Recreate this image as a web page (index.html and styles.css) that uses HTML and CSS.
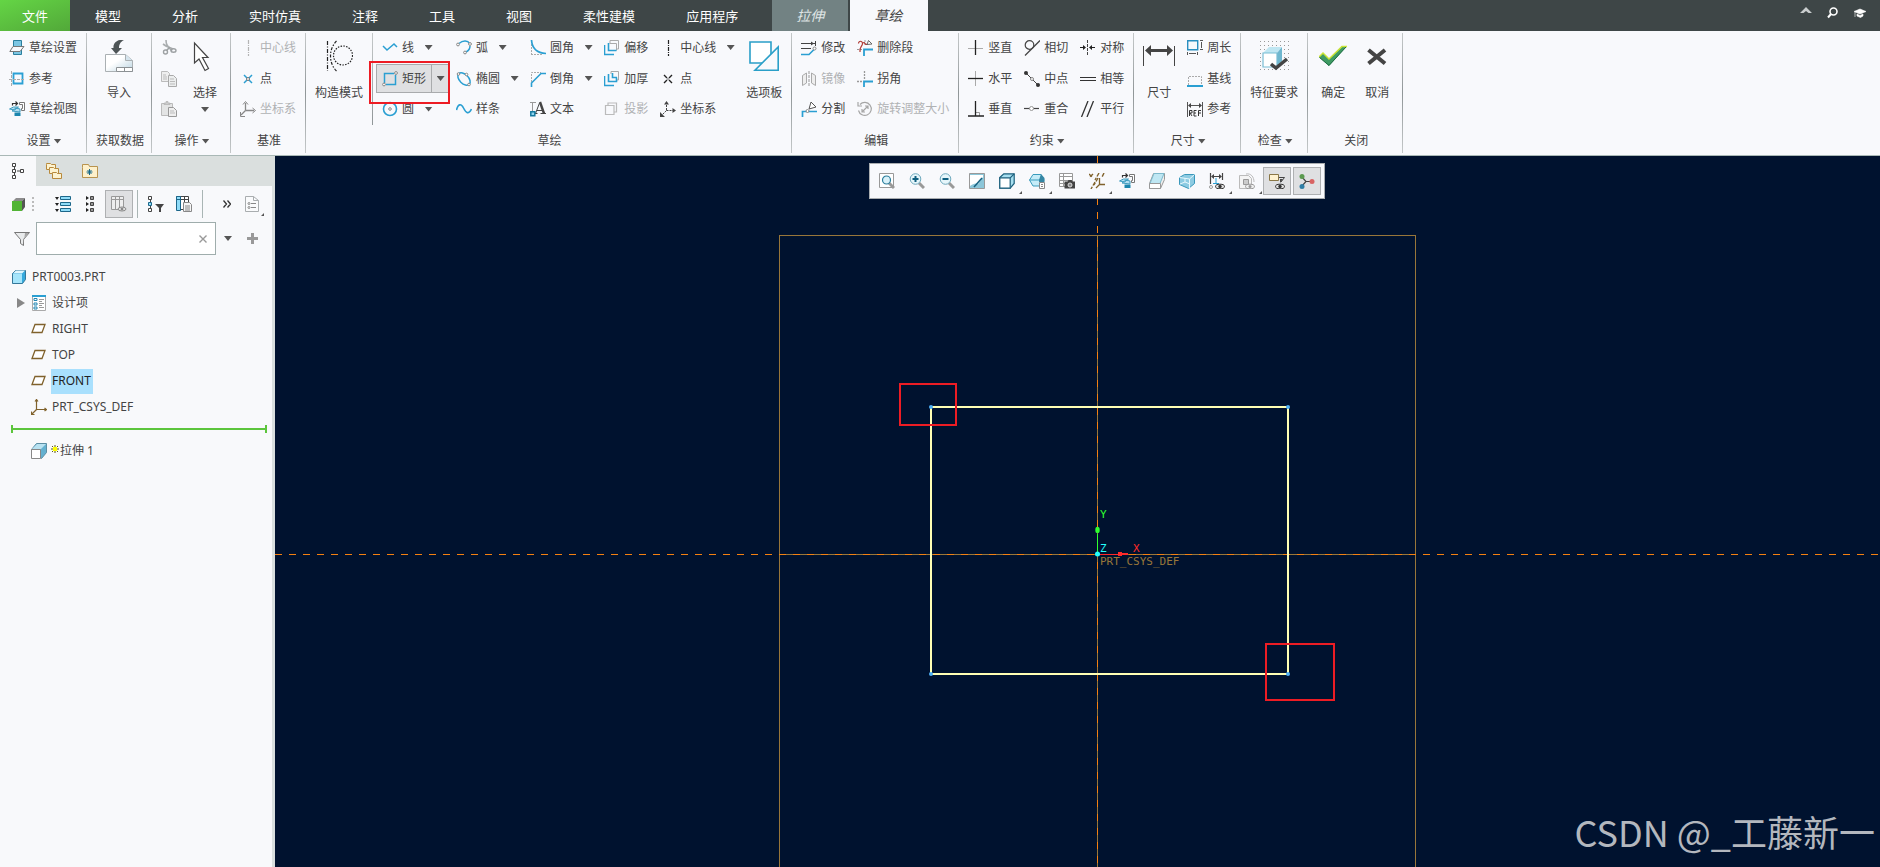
FILE: index.html
```html
<!DOCTYPE html>
<html lang="zh-CN">
<head>
<meta charset="utf-8">
<title>PRT0003 - 草绘</title>
<link rel="stylesheet" href="styles.css">
</head>
<body>
<nav class="tabs">
  <button class="tab file">文件</button>
  <button class="tab">模型</button>
  <button class="tab">分析</button>
  <button class="tab">实时仿真</button>
  <button class="tab">注释</button>
  <button class="tab">工具</button>
  <button class="tab">视图</button>
  <button class="tab">柔性建模</button>
  <button class="tab">应用程序</button>
  <button class="tab context">拉伸</button>
  <button class="tab active">草绘</button>
  <div class="tools">
    <button aria-label="最小化功能区"><svg width="12" height="16" viewBox="0 0 12 16"><path d="M0 9 6 3l6 6H8.500L6 7 3.500 9z" fill="#c9cdce"/></svg></button>
    <button aria-label="搜索"><svg width="12" height="16" viewBox="0 0 12 16"><circle cx="6.500" cy="7.500" r="3.500" fill="none" stroke="#fff" stroke-width="1.600"/><path d="M4 10 1 13.500" stroke="#fff" stroke-width="2"/></svg></button>
    <button aria-label="学习"><svg width="12" height="16" viewBox="0 0 12 16"><path d="M0 7.500 6 5l6 2.500L6 10zM3 10l3 1.500L9 10v2l-2.500 1.500L3 12zM1 8v5" fill="#fff" stroke="#fff" stroke-width=".6"/></svg></button>
  </div>
</nav>

<header class="ribbon">
  <section class="group">
    <div class="body">
      <div class="col">
        <div class="cmd"><button class="act"><svg class="i" viewBox="0 0 16 16"><path d="M4.500.5h8v14h-8z" fill="#7cc6e3" stroke="#2a7f9e"/><path d="M.8 11.500 4 6.500h11l-4 5z" fill="#f8f9fc" stroke="#777"/></svg>草绘设置</button></div>
        <div class="cmd"><button class="act"><svg class="i" viewBox="0 0 16 16"><path d="M4.500 2.500h9v10h-9z" fill="none" stroke="#2aa0d4" stroke-width="1.800"/><path d="M2.500 0v16M0 8.500h16" stroke="#aaa" stroke-dasharray="3 1" fill="none"/></svg>参考</button></div>
        <div class="cmd"><button class="act"><svg class="i" viewBox="0 0 16 16"><path d="m.5 8 4-2h5l-4 3zM3 10l4-3 4 1v3z" fill="#b5e0f2" stroke="#3d9cc0"/><path d="M5.500 11.500h6v3.500h-6z" fill="#1c86ae"/><path d="M3.500 4.500v-2H8M6.500.5l2 2-2 2" fill="none" stroke="#333" stroke-width="1.200"/><path d="M10.500 1.500h5v8h-3v-2h1v-4h-3z" fill="#fff" stroke="#777"/></svg>草绘视图</button></div>
      </div>
    </div>
    <button class="label">设置<i class="arr"></i></button>
  </section>

  <section class="group">
    <div class="body">
      <button class="big"><svg width="28" height="32" viewBox="0 0 28 32"><defs><linearGradient id="imp" x1="0" x2="1" y1="0" y2="1"><stop offset=".4" stop-color="#fff"/><stop offset="1" stop-color="#b9d3e0"/></linearGradient></defs><path d="M.5 14.500h20l7 6v11H.5z" fill="url(#imp)" stroke="#aab0b3"/><path d="M20.500 14.500v6h7" fill="#d6e5ee" stroke="#aab0b3"/><path d="M11.500 27.500h16v4h-16zM19.500 27.500v4" fill="#fff" stroke="#8c9194"/><path d="M19 0C12-1 8 3 8.500 8H6l5 6 6-6h-3c0-3 1-6 5-8z" fill="#4e5557"/></svg><span>导入</span></button>
    </div>
    <div class="label">获取数据</div>
  </section>

  <section class="group">
    <div class="body">
      <div class="col icons">
        <div class="cmd"><button class="act" disabled aria-label="剪切"><svg class="i" viewBox="0 0 16 16"><path d="M5 0c0 4 1 6 6 11M2 4c4 3 6 3 10 5" fill="none" stroke="#aaaeb0" stroke-width="1.600"/><circle cx="4.500" cy="12" r="2" fill="none" stroke="#9da1a3" stroke-width="1.400"/><ellipse cx="12.500" cy="10.500" rx="2.500" ry="1.800" fill="none" stroke="#9da1a3" stroke-width="1.400"/><path d="M9 7 5.500 10.500" stroke="#9da1a3" stroke-width="1.600"/></svg></button></div>
        <div class="cmd"><button class="act" disabled aria-label="复制"><svg class="i" viewBox="0 0 16 16"><path d="M.5.5h6l2 2v8h-8z" fill="#eee" stroke="#bbb"/><path d="M7.500 4.500h5l3 3v8h-8z" fill="#eceeee" stroke="#aaa"/><path d="M2 4h3M2 6h4M2 8h4M9 8h4M9 10.500h5M9 13h5" stroke="#bbb"/></svg></button></div>
        <div class="cmd"><button class="act" disabled aria-label="粘贴"><svg class="i" viewBox="0 0 16 16"><path d="M.5 2.500h11v12H.5z" fill="#e3e4e4" stroke="#bbb"/><path d="M3 3.500V2h2V.5h2V2h2v1.500z" fill="#ccc" stroke="#aaa" stroke-width=".6"/><path d="M7.500 6.500h5l3 3v6h-8z" fill="#eee" stroke="#999"/><path d="M9 10h4M9 12h5" stroke="#bbb"/></svg></button></div>
      </div>
      <button class="big select"><svg width="24" height="32" viewBox="0 0 24 32"><path d="M1.500 3v20l4.500-4 6 11.500 3.500-2-6-11H15z" fill="#fff" stroke="#444" stroke-width="1.200"/></svg><span>选择</span><i class="arr"></i></button>
    </div>
    <button class="label">操作<i class="arr"></i></button>
  </section>

  <section class="group">
    <div class="body">
      <div class="col">
        <div class="cmd"><button class="act" disabled><svg class="i" viewBox="0 0 16 16"><path d="M8.500 0v16" stroke="#b4b4b4" stroke-width="1.200" stroke-dasharray="4 1 1 1"/></svg>中心线</button></div>
        <div class="cmd"><button class="act"><svg class="i" viewBox="0 0 16 16"><path d="m4 4 8 8M12 4l-8 8" stroke="#2a9fd2" stroke-width="1.500"/><circle cx="8" cy="8" r="1.500" fill="#fff" stroke="#777"/></svg>点</button></div>
        <div class="cmd"><button class="act" disabled><svg class="i" viewBox="0 0 16 16"><path d="M5.500 9V2M5.500 9.500H14M5.500 9.500 1 14" stroke="#888" fill="none" stroke-width="1.300"/><path d="M3 3.500 5.500.5 8 3.500M12.500 7l3 2.500-3 2.500M.5 11v4.500H5" stroke="#888" fill="none"/></svg>坐标系</button></div>
      </div>
    </div>
    <div class="label">基准</div>
  </section>

  <section class="group">
    <div class="body">
      <button class="big"><svg width="28" height="32" viewBox="0 0 28 32" fill="none" stroke="#222" stroke-width="1.200"><path d="M2.500 1v30" stroke-dasharray="4 1.500 1 1.500"/><path d="M11.500 1c-8 8-8 22 0 30" stroke-dasharray="3 1.500 1.500 1.500"/><circle cx="18" cy="15.500" r="9.500" stroke-dasharray="1.500 1.300"/></svg><span>构造模式</span></button>
      <div class="rule"></div>
      <div class="col">
        <div class="cmd split"><button class="act"><svg class="i" viewBox="0 0 16 16"><path d="m1 6 4 4 7-6 3 3" fill="none" stroke="#2a9fd2" stroke-width="1.500"/></svg>线</button><button class="drop" aria-label="线选项"><i class="arr"></i></button></div>
        <div class="cmd split pressed"><button class="act"><svg class="i" viewBox="0 0 16 16"><path d="M12 2.500H2.500V12M4 13.500h9.500V4" fill="none" stroke="#2a9fd2" stroke-width="1.500"/><circle cx="14" cy="2" r="1.400" fill="#fff" stroke="#888"/><circle cx="2" cy="13.500" r="1.400" fill="#fff" stroke="#888"/></svg>矩形</button><button class="drop" aria-label="矩形选项"><i class="arr"></i></button><div class="mark"></div></div>
        <div class="cmd split"><button class="act"><svg class="i" viewBox="0 0 16 16"><circle cx="8" cy="8" r="6.500" fill="none" stroke="#2a9fd2" stroke-width="1.600"/><circle cx="8" cy="8" r="1.300" fill="#fff" stroke="#888"/></svg>圆</button><button class="drop" aria-label="圆选项"><i class="arr"></i></button></div>
      </div>
      <div class="col">
        <div class="cmd split"><button class="act"><svg class="i" viewBox="0 0 16 16"><path d="M3 3.500c4-3.500 9-3 10.500 0M14 6c0 3-2 5-4 6" fill="none" stroke="#2a9fd2" stroke-width="1.500"/><circle cx="2" cy="4.500" r="1.400" fill="#fff" stroke="#888"/><circle cx="14" cy="4" r="1.400" fill="#fff" stroke="#888"/><circle cx="9" cy="12.500" r="1.400" fill="#fff" stroke="#888"/></svg>弧</button><button class="drop" aria-label="弧选项"><i class="arr"></i></button></div>
        <div class="cmd split"><button class="act"><svg class="i" viewBox="0 0 16 16"><ellipse cx="8" cy="8" rx="7.500" ry="4.500" transform="rotate(45 8 8)" fill="none" stroke="#2a9fd2" stroke-width="1.500"/><circle cx="2.500" cy="3" r="1.300" fill="#fff" stroke="#888"/><circle cx="10.500" cy="3.500" r="1.300" fill="#fff" stroke="#888"/><circle cx="13" cy="13.500" r="1.300" fill="#fff" stroke="#888"/></svg>椭圆</button><button class="drop" aria-label="椭圆选项"><i class="arr"></i></button></div>
        <div class="cmd"><button class="act"><svg class="i" viewBox="0 0 16 16"><path d="M.5 9C2 3 5 2 7.500 7s5 7 8 1" fill="none" stroke="#2a9fd2" stroke-width="1.600"/></svg>样条</button></div>
      </div>
      <div class="col">
        <div class="cmd split"><button class="act"><svg class="i" viewBox="0 0 16 16"><path d="M1.500 4v11M1 14.500h12" stroke="#aaa" stroke-dasharray="2 1" fill="none"/><path d="M1.500 0C2 8 6 13 16 13.500" fill="none" stroke="#2a9fd2" stroke-width="1.700"/></svg>圆角</button><button class="drop" aria-label="圆角选项"><i class="arr"></i></button></div>
        <div class="cmd split"><button class="act"><svg class="i" viewBox="0 0 16 16"><path d="M1.500 11V1.500H11" stroke="#aaa" stroke-dasharray="2 1" fill="none"/><path d="M1.500 16v-4L11 2.500h5" fill="none" stroke="#2a9fd2" stroke-width="1.600"/></svg>倒角</button><button class="drop" aria-label="倒角选项"><i class="arr"></i></button></div>
        <div class="cmd"><button class="act"><svg class="i" viewBox="0 0 16 16"><path d="M2.500 11V2M0 1.500h6" stroke="#999"/><path d="M5.500 12.500 9.500 2M7 9.500h5M4.500 12.500h3M10.500 12.500H16" fill="none" stroke="#444"/><path d="m10 1 4 11.500" stroke="#444" stroke-width="2.400"/><path d="M.8 10.800h4v4h-4z" fill="#8fd4ef" stroke="#157aa0" stroke-width="1.500"/></svg>文本</button></div>
      </div>
      <div class="col">
        <div class="cmd"><button class="act"><svg class="i" viewBox="0 0 16 16"><path d="M5.500 3.500h7v7M6 3V.5h8.500V9H13" fill="none" stroke="#aaa"/><path d="M.5 5v9.500H10M4.500 3v7.500h8" fill="none" stroke="#2a9fd2" stroke-width="1.600"/></svg>偏移</button></div>
        <div class="cmd"><button class="act"><svg class="i" viewBox="0 0 16 16"><path d="M7 3V.5h7.500V9H13" fill="none" stroke="#aaa"/><path d="M.5 5v9.500H10M4.500 3v7.500h8V6.500M8.500 2v4.500H13" fill="none" stroke="#2a9fd2" stroke-width="1.600"/></svg>加厚</button></div>
        <div class="cmd"><button class="act" disabled><svg class="i" viewBox="0 0 16 16"><path d="M1.500 4.500h8.500v9H1.500zM4 4V2h8.500v9H10" fill="none" stroke="#bbb" stroke-width="1.200"/></svg>投影</button></div>
      </div>
      <div class="col">
        <div class="cmd split"><button class="act"><svg class="i" viewBox="0 0 16 16"><path d="M8.500 0v16" stroke="#222" stroke-width="1.200" stroke-dasharray="4 1 1 1"/></svg>中心线</button><button class="drop" aria-label="中心线选项"><i class="arr"></i></button></div>
        <div class="cmd"><button class="act"><svg class="i" viewBox="0 0 16 16"><path d="m4 4 3 3M9 9l3 3M12 4 9 7M7 9l-3 3" stroke="#222" stroke-width="1.400"/><circle cx="8" cy="8" r=".7" fill="#222"/></svg>点</button></div>
        <div class="cmd"><button class="act"><svg class="i" viewBox="0 0 16 16"><path d="M6.500 9V3M6.500 9.500H13M6.500 9.500 2 14" stroke="#444" fill="none" stroke-dasharray="2 1"/><path d="M6.500 0 9 3.500H4zM16 9.500 12.500 12V7zM0 16v-5l5 5z" fill="#444"/></svg>坐标系</button></div>
      </div>
      <button class="big palette"><svg width="30" height="32" viewBox="0 0 30 32"><path d="M1 2h21v21H1z" fill="#fff" stroke="#2a9fc8" stroke-width="1.600"/><path d="M29.200 7v23.200H6z" fill="#f8f9fc" stroke="#2a9fc8" stroke-width="1.600"/></svg><span>选项板</span></button>
    </div>
    <div class="label">草绘</div>
  </section>

  <section class="group">
    <div class="body">
      <div class="col">
        <div class="cmd"><button class="act"><svg class="i" viewBox="0 0 16 16"><path d="M0 3.500h14M14.500 1v5M0 8.500h10" stroke="#444" fill="none"/><path d="M10 1.500v4l3-2z" fill="#444"/><path d="M0 14.500h8l5-5" fill="none" stroke="#2a9fd2" stroke-width="1.600"/><circle cx="13.500" cy="8.500" r="1.500" fill="#fff" stroke="#888"/></svg>修改</button></div>
        <div class="cmd"><button class="act" disabled><svg class="i" viewBox="0 0 16 16"><path d="M1.500 4.500 5.500 2v10l-4 2.500zM14.500 4.500 10.500 2v10l4 2.500z" fill="#eee" stroke="#aaa"/><path d="M8 0v16" stroke="#999" stroke-dasharray="3 1"/></svg>镜像</button></div>
        <div class="cmd"><button class="act"><svg class="i" viewBox="0 0 16 16"><path d="M1.500 16v-5.500H16" fill="none" stroke="#2a9fd2" stroke-width="1.700"/><circle cx="6.500" cy="10" r="1.500" fill="#fff" stroke="#888"/><path d="m8 8 2-7 5 5z" fill="#fff" stroke="#555"/></svg>分割</button></div>
      </div>
      <div class="col">
        <div class="cmd"><button class="act"><svg class="i" viewBox="0 0 16 16"><path d="M7 16V9.500h9" fill="none" stroke="#2a9fd2" stroke-width="1.800"/><path d="M0 9.500h5M8 0v6" stroke="#999" stroke-dasharray="2 1"/><path d="M1.500 3.500c0-3 4-3 4 0S2 7 3 12M6 3c2-2 2 3 4 1" fill="none" stroke="#b03a34" stroke-width="1.200"/><path d="m10 4.500 1.500-4L15 4z" fill="#fff" stroke="#666"/></svg>删除段</button></div>
        <div class="cmd"><button class="act"><svg class="i" viewBox="0 0 16 16"><path d="M7 16v-5.500h9" fill="none" stroke="#2a9fd2" stroke-width="1.800"/><path d="M0 10.500h5M7.500 0v8" stroke="#999" stroke-width="1.300" stroke-dasharray="2 1"/></svg>拐角</button></div>
        <div class="cmd"><button class="act" disabled><svg class="i" viewBox="0 0 16 16"><path d="M3 3.500a6.500 6.500 0 1 1-1.500 6M1 1v4h4M5 11l6-6M5 8v3h3M8 5h3v3" fill="none" stroke="#a6a6a6" stroke-width="1.200"/></svg>旋转调整大小</button></div>
      </div>
    </div>
    <div class="label">编辑</div>
  </section>

  <section class="group">
    <div class="body">
      <div class="col">
        <div class="cmd"><button class="act"><svg class="i" viewBox="0 0 16 16"><path d="M0 8.500h15" stroke="#aaa"/><path d="M7.500 0v15" stroke="#222" stroke-width="1.300"/></svg>竖直</button></div>
        <div class="cmd"><button class="act"><svg class="i" viewBox="0 0 16 16"><path d="M7.500 0v15" stroke="#aaa"/><path d="M0 7.500h15" stroke="#222" stroke-width="1.300"/></svg>水平</button></div>
        <div class="cmd"><button class="act"><svg class="i" viewBox="0 0 16 16"><path d="M8 11.500h3.500V15" fill="none" stroke="#999"/><path d="M7.500 0v15M0 15h16" stroke="#222" stroke-width="1.300"/></svg>垂直</button></div>
      </div>
      <div class="col">
        <div class="cmd"><button class="act"><svg class="i" viewBox="0 0 16 16"><circle cx="5.500" cy="5" r="4.300" fill="none" stroke="#444" stroke-width="1.200"/><path d="M16 .5 1 15.500" stroke="#444" stroke-width="1.300"/></svg>相切</button></div>
        <div class="cmd"><button class="act"><svg class="i" viewBox="0 0 16 16"><path d="m2 2 12 12" stroke="#444"/><circle cx="2" cy="2" r="2" fill="#333"/><circle cx="14" cy="14" r="2" fill="#333"/><circle cx="8" cy="8" r="1.500" fill="#fff" stroke="#888"/></svg>中点</button></div>
        <div class="cmd"><button class="act"><svg class="i" viewBox="0 0 16 16"><path d="M0 7.500h15" stroke="#444" stroke-width="1.200"/><circle cx="7.500" cy="7.500" r="2" fill="#fff" stroke="#999"/></svg>重合</button></div>
      </div>
      <div class="col">
        <div class="cmd"><button class="act"><svg class="i" viewBox="0 0 16 16"><path d="M7.500 0v16" stroke="#444" stroke-dasharray="3 1"/><path d="M0 7.500h3M11 7.500h4" stroke="#222" stroke-width="1.200"/><path d="M3 5v5l3-2.500zM12 5v5L9 7.500z" fill="#222"/></svg>对称</button></div>
        <div class="cmd"><button class="act"><svg class="i" viewBox="0 0 16 16"><path d="M0 6.500h16M0 9.500h16" stroke="#333" stroke-width="1.200"/></svg>相等</button></div>
        <div class="cmd"><button class="act"><svg class="i" viewBox="0 0 16 16"><path d="M1.500 16 8 0M7 16l6.500-16" stroke="#333" stroke-width="1.300"/></svg>平行</button></div>
      </div>
    </div>
    <button class="label">约束<i class="arr"></i></button>
  </section>

  <section class="group">
    <div class="body">
      <button class="big"><svg width="32" height="32" viewBox="0 0 32 32"><path d="M.5 6v20M31.500 6v20" stroke="#444"/><path d="M6 10.500h20" stroke="#444" stroke-width="3"/><path d="M2 10.500 8 5v11zM30 10.500 24 5v11z" fill="#444"/></svg><span>尺寸</span></button>
      <div class="col">
        <div class="cmd"><button class="act"><svg class="i" viewBox="0 0 16 16"><path d="M.7.7h10v9H.7z" fill="none" stroke="#2a8fc0" stroke-width="1.400"/><path d="M13 .5h3M13 9.500h3M14.500 2v6M.5 12v3M10.500 12v3M2 13.500h7" stroke="#555" fill="none"/></svg>周长</button></div>
        <div class="cmd"><button class="act"><svg class="i" viewBox="0 0 16 16"><path d="M1.500 14V5.500h13V14" fill="none" stroke="#aaa" stroke-dasharray="2 1"/><path d="M0 15h16" stroke="#2a9fd2" stroke-width="2"/></svg>基线</button></div>
        <div class="cmd"><button class="act"><svg class="i" viewBox="0 0 16 16"><path d="M.5 1v15M15.500 1v15M3 4.500h10" stroke="#555"/><path d="M1 4.500 4 2v5zM15 4.500 12 2v5z" fill="#444"/><path d="M2.500 15V9.500H5V12H3l2 3M9.500 9.500H7V15h2.500M7 12h2M11.500 15V9.500H14M11.500 12H14" fill="none" stroke="#333"/></svg>参考</button></div>
      </div>
    </div>
    <button class="label">尺寸<i class="arr"></i></button>
  </section>

  <section class="group">
    <div class="body">
      <button class="big"><svg width="30" height="32" viewBox="0 0 30 32"><path d="M1 1.500h29M1 5.500h29M1 9.500h29M1 13.500h29M1 17.500h29M1 21.500h29M1 25.500h29M1 29.500h29" stroke="#999" stroke-dasharray="1 3"/><path d="m4 13 6-6h13l-5 6z" fill="#bfe6f2"/><path d="m18 13 5-6v14l-5 6z" fill="#6fb7cf"/><path d="M4 13h14v14H4z" fill="#fff" stroke="#79bdd4" stroke-width="1.200"/><path d="m12 24 5 4 11-9" fill="none" stroke="#444" stroke-width="3.500"/></svg><span>特征要求</span></button>
    </div>
    <button class="label">检查<i class="arr"></i></button>
  </section>

  <section class="group close">
    <div class="body">
      <button class="big"><svg width="28" height="32" viewBox="0 0 28 32"><path d="m0 17 4-4 6 6L23 6h5L10 26z" fill="#3f9b63"/><path d="m0 17 4-4 6 6L23 6.500h5" fill="none" stroke="#cbe436" stroke-width="1.500"/><path d="m.5 17.500 9.500 8L27 7" fill="none" stroke="#1c6b42"/></svg><span>确定</span></button>
      <button class="big"><svg width="28" height="32" viewBox="0 0 28 32"><path d="M5.500 10 22 23.500M22 10 5.500 23.500" stroke="#444" stroke-width="4"/></svg><span>取消</span></button>
    </div>
    <div class="label">关闭</div>
  </section>
</header>

<main class="work">
  <aside class="panel">
    <div class="ptabs">
      <button class="on" aria-label="模型树"><svg width="12" height="16" viewBox="0 0 12 16"><path d="M2.500 4v2M2.500 10v2M5 8h3" stroke="#444"/><path d="M.5.5h3v3h-3zM.5 6.500h3v3h-3zM.5 12.500h3v3h-3zM8.500 6.500h3v3h-3z" fill="#fff" stroke="#444"/></svg></button>
      <button aria-label="文件夹浏览器"><svg class="i" viewBox="0 0 16 16"><g fill="#fdf3d0" stroke="#b88a3c"><path d="M.5 1.500V.5h4l1 1h4v5h-9z"/><path d="M3.500 6.500v-2h4l1 1h4v5h-9z"/><path d="M6.500 10.500v-1h4l1 1h4v5h-9z"/></g></svg></button>
      <button aria-label="收藏夹"><svg class="i" viewBox="0 0 16 16"><path d="M.5 4.500v-3h6l1 2h8v11H.5z" fill="#fdf0cb" stroke="#b8934e"/><path d="M7.500 6v6M4.500 9h6M5.500 7l4 4M9.500 7l-4 4" stroke="#15688a"/></svg></button>
    </div>
    <div class="pbar">
      <button class="cube" aria-label="模型"><svg width="14" height="16" viewBox="0 0 14 16"><path d="m1 5 3-3h9l-3 3z" fill="#8c8c8c"/><path d="m10 5 3-3v9l-3 4z" fill="#555"/><path d="M0 5h10v10H0z" fill="#52b435"/></svg></button>
      <svg class="grip" width="2" height="16" viewBox="0 0 2 16"><path d="M1 1v15" stroke="#bbb" stroke-width="2" stroke-dasharray="2 2"/></svg>
      <button class="tb" aria-label="全部展开"><svg class="i" viewBox="0 0 16 16"><path d="M0 1h4L2 4zM0 7h4l-2 3zM0 13h4l-2 3z" fill="#222"/><path d="M5.500.5h10v3h-10zM5.500 6.500h10v3h-10zM5.500 12.500h10v3h-10z" fill="#8fdcf8" stroke="#1c678a"/></svg></button>
      <button class="tb" aria-label="全部折叠"><svg class="i" viewBox="0 0 16 16"><path d="m3 0 3 2-3 2zM3 6l3 2-3 2zM3 12l3 2-3 2z" fill="#222"/><path d="M7.500.5h3v3h-3zM7.500 6.500h3v3h-3zM7.500 12.500h3v3h-3z" fill="#999" stroke="#444"/></svg></button>
      <button class="tb on" aria-label="显示列"><svg class="i" viewBox="0 0 16 16"><path d="M.5.5h12v13H.5zM4.500.5v13M8.500.5v13M.5 3.500h12" fill="#eee" stroke="#999"/><ellipse cx="11" cy="13" rx="4" ry="2" fill="#ddd" stroke="#888"/><circle cx="11" cy="13" r="1.300" fill="#888"/></svg></button>
      <span class="vr"></span>
      <button class="tb" aria-label="树过滤器"><svg class="i" viewBox="0 0 16 16"><path d="M2.500 4v8" stroke="#444"/><path d="M.5.5h3v3h-3zM.5 12.500h3v3h-3z" fill="#fff" stroke="#444"/><path d="M.5 6.500h3v3h-3z" fill="#8fdcf8" stroke="#1c678a"/><path d="M7 8h9l-3 4v4h-2v-4z" fill="#444"/></svg></button>
      <button class="tb" aria-label="树列"><svg class="i" viewBox="0 0 16 16"><path d="M.5.5h12v13H.5zM8.500.5v6M.5 3.500h12" fill="#fff" stroke="#444"/><path d="M.5.500h4v14h-4zM.5 3.500h4" fill="#8fdcf8" stroke="#1c678a"/><path d="M7.500 6.500h6l2 2v7h-8z" fill="#f6f6f6" stroke="#888"/><path d="M9 10h5M9 12h5M9 14h5" stroke="#888"/></svg></button>
      <span class="vr"></span>
      <button class="more" aria-label="更多"><svg width="8" height="8" viewBox="0 0 8 8"><path d="m.5.5 3 3.500-3 3.500M4.500.5l3 3.500-3 3.500" fill="none" stroke="#333" stroke-width="1.300"/></svg></button>
      <button class="tb menu" aria-label="设置"><svg width="14" height="16" viewBox="0 0 14 16"><path d="M.5.5h8l5 4v11H.5z" fill="#fafbfc" stroke="#a9adaf"/><path d="M8.500.5v4h5" fill="none" stroke="#a9adaf"/><circle cx="4" cy="7.500" r="1" fill="none" stroke="#888"/><circle cx="4" cy="11.500" r="1" fill="none" stroke="#888"/><path d="M6 7.500h5M6 11.500h5" stroke="#888"/></svg></button>
    </div>
    <div class="filter">
      <svg class="i" viewBox="0 0 16 16"><path d="M.5 1.500h15l-6 7v6l-3-2v-4z" fill="#e9ebec" stroke="#777"/><path d="M11 2h3.500l-5 6v5.500z" fill="#a5a5a5"/></svg>
      <div class="field"><input type="text" aria-label="过滤"><button aria-label="清除"><svg width="8" height="8" viewBox="0 0 8 8"><path d="m.5.5 7 7M7.500.5l-7 7" stroke="#999" stroke-width="1.400"/></svg></button></div>
      <button class="fdrop" aria-label="过滤选项"><i class="arr"></i></button>
      <button class="fadd" aria-label="添加"><svg width="11" height="11" viewBox="0 0 11 11"><path d="M5.500 0v11M0 5.500h11" stroke="#999" stroke-width="3"/></svg></button>
    </div>
    <ul class="tree">
      <li class="root"><svg width="14" height="14" viewBox="0 0 14 14"><path d="m.5 3.500 3-3h10v9l-3 4H.5z" fill="#36a9dc" stroke="#35789a"/><path d="m1 3.500 3-3h9l-3 3z" fill="#e0f6fd"/><path d="M1 4h9v9H1z" fill="#a5e5fb"/></svg><span>PRT0003.PRT</span></li>
      <li class="sub"><svg class="exp" width="8" height="10" viewBox="0 0 8 10"><path d="m0 0 8 5-8 5z" fill="#888"/></svg><svg class="i" viewBox="0 0 16 16"><path d="M1.500.5h13v15h-13z" fill="#fff" stroke="#aaa"/><path d="M1 1h14" stroke="#2a9fd2" stroke-width="2"/><path d="M3 3.500h3v2H3zM3 8h3v2H3zM3 12h3v2H3z" fill="#fff" stroke="#2587b3"/><path d="M8 4.500h5M8 6.500h3M8 8.500h5M8 10.500h3M8 12.500h5" stroke="#999"/></svg><span>设计项</span></li>
      <li><svg class="i" viewBox="0 0 16 16"><path d="M4 3.500h10l-3 8H1z" fill="#fff" stroke="#80622c" stroke-width="1.300"/></svg><span>RIGHT</span></li>
      <li><svg class="i" viewBox="0 0 16 16"><path d="M4 3.500h10l-3 8H1z" fill="#fff" stroke="#80622c" stroke-width="1.300"/></svg><span>TOP</span></li>
      <li><svg class="i" viewBox="0 0 16 16"><path d="M4 3.500h10l-3 8H1z" fill="#fff" stroke="#80622c" stroke-width="1.300"/></svg><span class="sel">FRONT</span></li>
      <li><svg class="i" viewBox="0 0 16 16"><path d="M5.500 1v9.500H15M5.500 10.500 1 15M4 2.500l1.500-2L7 2.500M13.500 9l2 1.500-2 1.500M.5 12.500v3h3" fill="none" stroke="#80622c" stroke-width="1.200"/></svg><span>PRT_CSYS_DEF</span></li>
      <li class="insert"></li>
      <li><svg class="i" viewBox="0 0 16 16"><path d="m.5 6.500 5-6h10v9l-5 6z" fill="#64b1d0" stroke="#5c8ea3"/><path d="m1 6 5-5h9l-5 5z" fill="#b9e2f1"/><path d="M.5 6.500h9v9h-9z" fill="#fff" stroke="#888"/></svg><span class="new"><svg width="8" height="8" viewBox="0 0 8 8"><path d="M4 0v8M0 4h8M1 1l6 6M7 1 1 7" stroke="#5e5b10"/><path d="M2 2h4v4H2z" fill="#ff0"/></svg>拉伸 1</span></li>
    </ul>
  </aside>

  <div class="canvas">
    <svg class="scene" width="100%" height="100%">
      <g fill="none" shape-rendering="crispEdges">
        <path d="M504.500 720V79.500h636V720M504 398.500h637M822.500 79v641" stroke="#98763a"/>
        <path d="M0 398.500h2400M822.500 0v720" stroke="#f58010" stroke-dasharray="7 7"/>
        <path d="M656 251h357v267H656z" stroke="#ffffb4" stroke-width="2"/>
        <path d="M822.500 378v20" stroke="#2fff2f"/>
        <path d="M825 398.500h28" stroke="#ff2a2a"/>
      </g>
      <g fill="#4fb0f5"><circle cx="656" cy="251" r="2"/><circle cx="1013" cy="251" r="2"/><circle cx="656" cy="518" r="2"/><circle cx="1013" cy="518" r="2"/></g>
      <ellipse cx="822.500" cy="374" rx="2.200" ry="3.200" fill="#2fff2f"/>
      <path d="M843 396h4v1h6v2h-6v1h-4z" fill="#ff2a2a"/>
      <circle cx="822.500" cy="398" r="2.500" fill="#2ff"/>
      <g class="csys"><text x="825" y="362" fill="#2fff2f">Y</text><text x="825" y="396" fill="#2ff">Z</text><text x="858" y="396" fill="#ff2a2a">X</text><text x="825" y="409" fill="#98763a">PRT_CSYS_DEF</text></g>
      <g fill="none" stroke="#ed1c24" stroke-width="2"><path d="M625 228h56v41h-56zM991 488h68v56h-68z"/></g>
    </svg>
    <div class="viewbar">
      <button aria-label="重新调整"><svg class="i" viewBox="0 0 16 16"><path d="M.5.5h14v14H.5z" fill="#fff" stroke="#999"/><path d="m10 10 5 5" stroke="#999" stroke-width="3"/><circle cx="7.500" cy="7" r="4" fill="#d9f1f9" stroke="#2a7d9c" stroke-width="1.200"/></svg></button>
      <button aria-label="放大"><svg class="i" viewBox="0 0 16 16"><path d="m10 10 5 5" stroke="#999" stroke-width="3"/><circle cx="6.500" cy="6" r="5.300" fill="#e6f6fb" stroke="#6fa9bd"/><path d="M3.500 6h6M6.500 3v6" stroke="#0f5f80" stroke-width="2"/></svg></button>
      <button aria-label="缩小"><svg class="i" viewBox="0 0 16 16"><path d="m10 10 5 5" stroke="#999" stroke-width="3"/><circle cx="6.500" cy="6" r="5.300" fill="#e6f6fb" stroke="#6fa9bd"/><path d="M3.500 6h6" stroke="#0f5f80" stroke-width="2"/></svg></button>
      <button aria-label="重画"><svg class="i" viewBox="0 0 16 16"><path d="M.5.5h15v15H.5z" fill="#8cc6d9" stroke="#999"/><path d="M1 2h13v2L9 11c-3-1-5 0-8 2z" fill="#fff"/><path d="m13 5-8 9" stroke="#156080" stroke-width="1.500"/></svg></button>
      <button class="menu" aria-label="显示样式"><svg class="i" viewBox="0 0 16 16"><path d="m.8 4.500 4-3.700h10.400v9.700l-4 4.700H.8z" fill="#a7dff0" stroke="#1b5f7c" stroke-width="1.200"/><path d="M.8 4.800h10.400v10.400H.8zM11.200 4.800l4-4" fill="#fff" stroke="#1b5f7c" stroke-width="1.200"/></svg></button>
      <button class="menu" aria-label="已保存方向"><svg class="i" viewBox="0 0 16 16"><path d="M.5 7 4 1.500h8L15 7l-3 6H4zM.5 7H15" fill="#c5ecf8" stroke="#3a9cbd"/><path d="m10 7 2-6 3.500 4v4H10z" fill="#3587a5"/><path d="M10.500 9.500h5v6h-5z" fill="#fff" stroke="#888"/><path d="M12 11.500h2M12 13.500h2" stroke="#888"/></svg></button>
      <button aria-label="视图管理器"><svg class="i" viewBox="0 0 16 16"><path d="M.5.5h13v13H.5zM4.500.5v13M.5 3.500h13M.5 7.500h13M.5 10.500h13" fill="#fff" stroke="#999"/><path d="M5.500 8.500h3l1-1.500h3l1 1.500H16V15.500H5.500z" fill="#444"/><circle cx="11" cy="12" r="2" fill="#888" stroke="#ddd"/></svg></button>
      <button class="menu" aria-label="基准显示过滤器"><svg class="i" viewBox="0 0 16 16"><path d="m0 1 4 4M4 1 0 5M10 0 6 7M15 0l-2 4M6 9l-4 7M9 5l-4 7" stroke="#80622c" stroke-width="1.400" stroke-dasharray="4 1.500"/><path d="M10.500 5v6.500H16M10.500 11.500 7 15" fill="none" stroke="#80622c" stroke-width="1.300"/></svg></button>
      <button aria-label="草绘视图"><svg class="i" viewBox="0 0 16 16"><path d="m.5 8 4-2h5l-4 3zM3 10l4-3 4 1v3z" fill="#b5e0f2" stroke="#3d9cc0"/><path d="M5.500 11.500h6v3.500h-6z" fill="#1c86ae"/><path d="M3.500 4.500v-2H8M6.500.5l2 2-2 2" fill="none" stroke="#333" stroke-width="1.200"/><path d="M10.500 1.500h5v8h-3v-2h1v-4h-3z" fill="#fff" stroke="#777"/></svg></button>
      <button aria-label="修剪模型"><svg class="i" viewBox="0 0 16 16"><path d="m.5 10.500 4-10h11v6l-4 9H.5z" fill="#eee" stroke="#999"/><path d="m1 10.500 4-10h10l-4 10z" fill="#bfe7f3" stroke="#7cb9cc"/><path d="M.5 10.500h11v5H.5z" fill="#fff" stroke="#999"/></svg></button>
      <button aria-label="透视图"><svg class="i" viewBox="0 0 16 16"><path d="m.5 4.500 5-3h10v9l-6 5-9-4z" fill="#8dcbe2" stroke="#3b98bb"/><path d="m.5 4.500 10 1.500v9M10.500 6l5-4.500M1 11l5-2V5M6 9l5 2" fill="none" stroke="#e8f8fd"/></svg></button>
      <button class="menu" aria-label="尺寸显示"><svg class="i" viewBox="0 0 16 16"><path d="M1.500 0v11M13.500 0v7M3 3.500h9" stroke="#444" stroke-width="1.200"/><path d="M2 3.500 5 1v5zM13 3.500 10 1v5z" fill="#444"/><path d="M4 10.500h6M7 5v5" stroke="#2a9fd2"/><circle cx="2" cy="14" r="1.500" fill="#fff" stroke="#999"/><ellipse cx="11" cy="13.500" rx="4.500" ry="2.300" fill="#ddd" stroke="#333"/><circle cx="11" cy="13.500" r="1.700" fill="#333"/></svg></button>
      <button class="menu" aria-label="约束显示"><svg class="i" viewBox="0 0 16 16"><path d="M.5 2.500h9l3 3v10H.5z" fill="#f4f4f4" stroke="#bbb"/><path d="M4.500 6.500h5v5h-5z" fill="#ccc" stroke="#999"/><path d="M7 1c5-1 8 3 8 8" fill="none" stroke="#bbb"/><ellipse cx="11" cy="13.500" rx="4.500" ry="2.300" fill="#eee" stroke="#999"/><circle cx="11" cy="13.500" r="1.500" fill="#999"/></svg></button>
      <button class="on" aria-label="注释显示"><svg class="i" viewBox="0 0 16 16"><path d="M.5 1.500h9v6h-9z" fill="#fff2d0" stroke="#8a7747"/><path d="M10 4.500h5.500L12 9" fill="none" stroke="#444"/><path d="m14 6-3 4V6z" fill="#444"/><ellipse cx="11" cy="13.500" rx="4.500" ry="2.300" fill="#ddd" stroke="#333"/><circle cx="11" cy="13.500" r="1.700" fill="#333"/></svg></button>
      <button class="on" aria-label="旋转中心"><svg class="i" viewBox="0 0 16 16"><path d="m3 4 4 4.500L3 13M7 8.500h6" fill="none" stroke="#444" stroke-width="1.200"/><circle cx="3" cy="3.500" r="2.500" fill="#5b9a50"/><circle cx="3" cy="13.500" r="2.500" fill="#2f7ea5"/><circle cx="13" cy="8.500" r="2.500" fill="#d86363"/></svg></button>
    </div>
    <p class="watermark">CSDN @_工藤新一</p>
  </div>
</main>
</body>
</html>
```
FILE: styles.css
```css
* { box-sizing: border-box; }

html, body { height: 100%; }

body {
  margin: 0;
  display: flex;
  flex-direction: column;
  overflow: hidden;
  background: #f8f9fc;
  color: #444;
  font: 12px/16px "Noto Sans", "Noto Sans CJK SC", sans-serif;
}

button {
  margin: 0;
  padding: 0;
  border: 0;
  background: none;
  color: inherit;
  font: inherit;
  white-space: nowrap;
}

button:disabled { color: #b0b2b4; }

svg { display: block; flex: none; }

.i { width: 16px; height: 16px; }

.arr {
  flex: none;
  width: 8px;
  height: 5px;
  background: #555;
  clip-path: polygon(0 0, 100% 0, 50% 100%);
}

/* tabs */
.tabs {
  display: flex;
  flex: none;
  height: 31px;
  gap: 1px;
  background: #3e4647;
  color: #fff;
  font-size: 13px;
}

.tab { padding: 0 25px; }

.tab.file {
  margin-right: -1px;
  padding: 0 22px;
  background: linear-gradient(160deg, #64d545, #52a839);
}

.tab.context {
  margin-left: 8px;
  padding: 0 24px;
  background: #728283;
  color: #dfe5e5;
  font-size: 14px;
  font-style: italic;
}

.tab.active {
  margin-left: 1px;
  padding: 0 26px 0 24px;
  background: #f8f9fc;
  color: #444;
  font-size: 14px;
  font-style: italic;
}

.tools {
  display: flex;
  align-items: flex-start;
  gap: 15px;
  margin-left: auto;
  padding: 4px 14px 0 0;
}

/* ribbon */
.ribbon {
  display: flex;
  flex: none;
  border-bottom: 1px solid #a9b8b6;
}

.group {
  display: flex;
  flex-direction: column;
  padding: 0 4px 0 3px;
  background: linear-gradient(#c4c8c9, #909698 50%, #c4c8c9) right top 2px / 1px calc(100% - 4px) no-repeat;
}

.body {
  display: flex;
  justify-content: center;
  height: 94px;
  padding-top: 1px;
}

.label {
  display: flex;
  align-items: center;
  justify-content: center;
  gap: 3px;
  height: 30px;
  padding: 2px 4px 0 6px;
}

.col { display: flex; flex-direction: column; }

.cmd {
  position: relative;
  display: flex;
  align-items: center;
  align-self: flex-start;
  height: 31px;
}

.cmd:last-child { height: 30px; }

.act {
  display: flex;
  align-items: center;
  gap: 4px;
  height: 29px;
  padding: 0 6px;
}

.split .act { padding-right: 5px; }

.drop {
  display: flex;
  align-items: center;
  justify-content: center;
  width: 19px;
  height: 29px;
}

.pressed .act {
  padding-left: 5px;
  border: 1px solid #a9abad;
  border-right: 0;
  background: #dfe0e2;
}

.pressed .drop {
  border: 1px solid #a9abad;
  background: #dfe0e2;
}

.mark {
  position: absolute;
  z-index: 1;
  left: -7px;
  top: -2px;
  width: 81px;
  height: 43px;
  border: 2px solid #ed1c24;
  pointer-events: none;
}

.icons .act { padding-right: 5px; }

.big {
  display: flex;
  flex-direction: column;
  align-items: center;
  gap: 13px;
  padding: 8px 6px 0;
}

.big .arr { margin-top: -7px; }

.big.select { padding: 8px 10px 0 11px; }

.big.palette { padding: 8px 6px 0; }

.close .big { padding: 8px 8px 0; }

.rule {
  width: 1px;
  margin: 1px 3px 0;
  background: linear-gradient(#c4c8c9, #909698);
}

/* work area */
.work { display: flex; flex: 1; min-height: 0; }

.panel {
  flex: none;
  width: 275px;
  border-right: 3px solid #d9dfde;
  background: #f8f9fb;
}

.ptabs {
  display: flex;
  height: 30px;
  background: #dadfde;
}

.ptabs button {
  display: grid;
  place-items: center;
  width: 36px;
}

.ptabs .on { background: #f8f9fb; }

.pbar {
  display: flex;
  align-items: center;
  height: 36px;
  padding: 0 6px 0 12px;
}

.grip { margin: 0 15px 0 6px; }

.tb {
  display: grid;
  place-items: center;
  width: 28px;
  height: 28px;
}

.tb.on, .viewbar .on {
  border: 1px solid #aeb0b2;
  background: #dfe0e2;
}

.vr {
  width: 1px;
  height: 28px;
  margin: 0 4px;
  background: #a9b5b4;
}

.more { margin: 0 7px 0 auto; }

.menu { position: relative; }

.menu::after {
  content: "";
  position: absolute;
  right: 2px;
  bottom: 2px;
  width: 3px;
  height: 3px;
  background: #555;
  clip-path: polygon(100% 0, 100% 100%, 0 100%);
}

.viewbar .menu::after { right: -1px; bottom: 1px; }

.filter {
  display: flex;
  align-items: center;
  padding: 0 14px;
}

.field {
  display: flex;
  flex: 1;
  align-items: center;
  min-width: 0;
  height: 33px;
  margin: 0 8px 0 6px;
  padding-right: 8px;
  border: 1px solid #9fadac;
  background: #fff;
}

.field input {
  flex: 1;
  min-width: 0;
  border: 0;
  outline: 0;
  background: none;
  font: inherit;
}

.fdrop { display: flex; align-items: center; height: 16px; }

.fadd { margin-left: 15px; }

.tree {
  margin: 0;
  padding: 9px 0 0;
  list-style: none;
}

.tree li {
  display: flex;
  align-items: center;
  height: 26px;
  gap: 4px;
  padding-left: 31px;
}

.tree .root { gap: 5px; padding-left: 12px; }

.tree .sub { padding-left: 17px; }

.exp { margin-right: 2px; }

.tree span { padding: 4px 2px 5px 1px; }

.tree .sel { background: #a9e0fd; color: #222; }

.tree .new { display: flex; gap: 1px; padding-left: 0; }

.new svg { margin-top: 2px; }

.tree .insert {
  height: 18px;
  margin: 0 5px 0 11px;
  padding: 0;
  background:
    linear-gradient(#5cc53c, #5cc53c) left center / 2px 8px no-repeat,
    linear-gradient(#5cc53c, #5cc53c) right center / 2px 8px no-repeat,
    linear-gradient(#5cc53c, #5cc53c) center / 100% 2px no-repeat;
}

.canvas {
  position: relative;
  flex: 1;
  min-width: 0;
  overflow: hidden;
  background: #00122f;
}

.scene { position: absolute; inset: 0; }

.csys { font: 11px "DejaVu Sans Mono", monospace; }

.viewbar {
  position: absolute;
  left: 594px;
  top: 7px;
  display: flex;
  gap: 2px;
  padding: 3px;
  border: 1px solid #a9adb0;
  background: #f8f9fc;
}

.viewbar button {
  display: grid;
  place-items: center;
  width: 28px;
  height: 28px;
}

.watermark {
  position: absolute;
  right: 5px;
  bottom: 12px;
  margin: 0;
  color: #b3b7be;
  font: 36px/48px "Noto Sans CJK SC", sans-serif;
}
```
